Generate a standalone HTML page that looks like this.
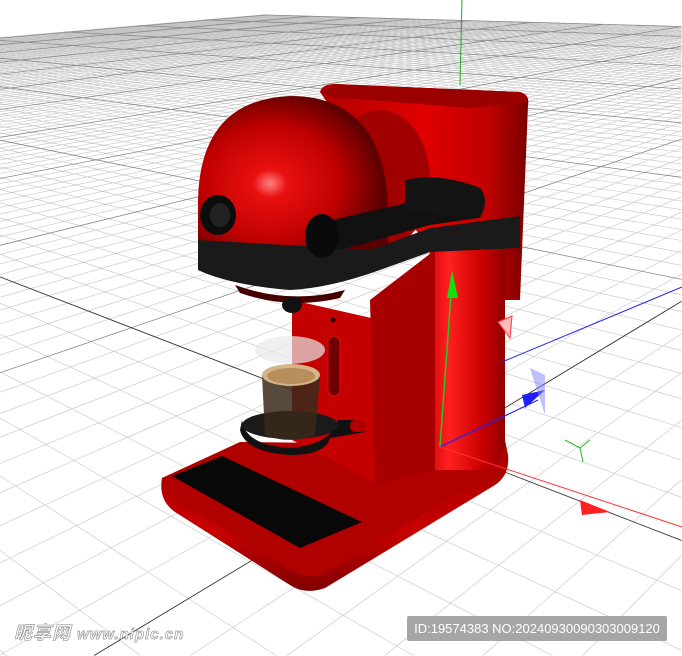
<!DOCTYPE html>
<html><head><meta charset="utf-8"><style>
html,body{margin:0;padding:0;width:682px;height:656px;overflow:hidden;background:#fff}
svg{overflow:hidden}
.wm{position:absolute;left:14px;top:619px;font:italic bold 18px "Liberation Sans","Noto Sans CJK SC",sans-serif;color:#fff;-webkit-text-stroke:0.7px #999;letter-spacing:1px}
.wm small{font-size:15px}
.id{position:absolute;left:407px;top:616px;width:260px;height:25px;background:#a6a6a6;color:#fff;font:13px "Liberation Sans",sans-serif;line-height:25px;text-align:center;border-radius:2px}
</style></head><body>
<svg width="682" height="656" viewBox="0 0 682 656" style="position:absolute;left:0;top:0">
<defs>
<radialGradient id="dome" cx="0.38" cy="0.55" r="0.6">
<stop offset="0" stop-color="#ff8080"/><stop offset="0.15" stop-color="#e81010"/><stop offset="0.6" stop-color="#c00000"/><stop offset="1" stop-color="#5a0000"/></radialGradient>
<linearGradient id="tower" x1="0" x2="1"><stop offset="0" stop-color="#b00000"/><stop offset="0.5" stop-color="#e00000"/><stop offset="0.8" stop-color="#c00000"/><stop offset="1" stop-color="#7a0000"/></linearGradient>
<linearGradient id="front" x1="0" x2="1"><stop offset="0" stop-color="#d00000"/><stop offset="0.3" stop-color="#ff2020"/><stop offset="0.7" stop-color="#cc0000"/><stop offset="1" stop-color="#900000"/></linearGradient>
<linearGradient id="base" x1="0" y1="0" x2="0" y2="1"><stop offset="0" stop-color="#a00000"/><stop offset="0.6" stop-color="#c80000"/><stop offset="1" stop-color="#800000"/></linearGradient>
</defs>
<g id="grid"></g>
<line x1="462" y1="0" x2="460" y2="85" stroke="#2a2" stroke-width="1"/>
<!-- base -->
<path d="M162,478 Q158,500 175,512 L290,585 Q305,595 325,588 L495,485 Q510,475 508,455 L505,440 L430,448 L240,445 Z" fill="url(#base)"/>
<path d="M162,478 Q160,492 178,502 L296,572 Q310,580 326,573 L500,468 Q510,460 505,445 L240,442 Z" fill="#b00000"/>
<path d="M172,476 L222,456 L362,522 L300,548 Z" fill="#080808"/>
<!-- tower back -->
<path d="M320,92 Q322,84 335,84 L520,92 Q530,95 528,105 L520,300 L505,300 L500,450 Q498,470 470,470 L430,470 L430,250 L360,150 Z" fill="url(#tower)"/>
<path d="M320,92 L335,84 L520,92 Q530,95 526,102 L470,108 L330,97 Z" fill="#9a0000"/>
<!-- front column -->
<path d="M430,240 L505,230 L505,445 Q500,470 470,470 L435,470 Q425,460 425,440 Z" fill="url(#front)"/>
<!-- middle panel -->
<path d="M292,300 L380,320 L380,485 L292,440 Z" fill="#c40000"/>
<path d="M370,300 L435,250 L435,470 L375,485 Z" fill="#a80000"/>
<rect x="328" y="336" width="12" height="60" rx="6" fill="#700000" stroke="#e01010"/>
<circle cx="333" cy="320" r="2.5" fill="#200"/>
<!-- dome back cylinder -->
<ellipse cx="380" cy="180" rx="50" ry="70" fill="#a00000"/>
<!-- dome -->
<path d="M198,255 L198,200 Q200,100 290,96 Q380,96 388,200 L388,255 Z" fill="url(#dome)"/>
<path d="M198,240 L370,250 L430,228 L520,216 L520,248 L430,252 L380,270 Q330,288 290,290 Q230,285 198,270 Z" fill="#1a1a1a"/>
<path d="M235,285 Q290,305 345,290 L340,298 Q290,310 240,293 Z" fill="#400"/>
<ellipse cx="292" cy="305" rx="10" ry="8" fill="#111"/>
<!-- knob -->
<ellipse cx="218" cy="215" rx="18" ry="20" fill="#0d0d0d"/>
<ellipse cx="220" cy="215" rx="10" ry="12" fill="#222"/>
<!-- handle -->
<path d="M310,225 L420,200 L470,185 L485,200 L478,218 L430,225 L340,250 Z" fill="#111"/>
<ellipse cx="322" cy="236" rx="17" ry="22" fill="#0a0a0a"/>
<path d="M405,180 Q440,172 480,188 Q490,200 480,218 L440,215 L405,210 Z" fill="#141414"/>
<!-- cup & tray -->
<ellipse cx="290" cy="350" rx="35" ry="14" fill="#e8e8e8" opacity="0.7"/>
<path d="M242,420 Q245,445 290,448 Q330,445 338,420 L360,420 L365,432 L330,438 Q325,455 290,455 Q245,452 240,430 Z" fill="#111"/>
<ellipse cx="290" cy="425" rx="48" ry="14" fill="#1a1a1a"/>
<path d="M262,375 L265,435 Q290,445 315,435 L320,375 Z" fill="#3a2a1a" opacity="0.85"/>
<ellipse cx="291" cy="375" rx="29" ry="11" fill="#d6b48a"/>
<ellipse cx="291" cy="376" rx="24" ry="8" fill="#b88e5a"/>
<rect x="350" y="420" width="16" height="12" rx="5" fill="#b00000"/>
<!-- axes -->
<line x1="440" y1="447" x2="452" y2="280" stroke="#22cc22" stroke-width="1.5"/>
<path d="M447,298 L452,270 L458,298 Z" fill="#11dd11"/>
<line x1="440" y1="447" x2="538" y2="400" stroke="#2020ff" stroke-width="1.2"/>
<line x1="502" y1="362" x2="682" y2="287" stroke="#2020ff" stroke-width="1"/>
<path d="M522,395 L545,390 L525,408 Z" fill="#2020ff"/>
<path d="M530,368 L545,375 L545,415 Z" fill="#8080ff" opacity="0.5"/>
<line x1="440" y1="447" x2="682" y2="527" stroke="#ff3030" stroke-width="1"/>
<path d="M580,500 L610,512 L582,515 Z" fill="#ff2020"/>
<path d="M498,322 L512,316 L510,338 Z" fill="#ffbbbb" stroke="#f33"/>
<path d="M565,440 L580,448 L590,440 M580,448 L583,462" stroke="#22bb22" fill="none"/>
</svg>
<div class="wm">昵享网 <small>www.nipic.cn</small></div>
<div class="id">ID:19574383 NO:20240930090303009120</div>
<script>
(function(){
var g=document.getElementById('grid'),NS='http://www.w3.org/2000/svg';
var O=[440,447],V1=[-750,-13],V2=[1306,-75],s1=0.035,s2=0.045,U=111,V=80;
function P(u,v){var a=s1*u,b=s2*v,w=1+a+b;return [(O[0]+a*V1[0]+b*V2[0])/w,(O[1]+a*V1[1]+b*V2[1])/w];}
function clip(p,q){
 var x0=p[0],y0=p[1],dx=q[0]-x0,dy=q[1]-y0,t0=0,t1=1;
 var P_=[-dx,dx,-dy,dy],Q=[x0-0,681.5-x0,y0-0,655.5-y0];
 for(var i=0;i<4;i++){
  if(P_[i]==0){if(Q[i]<0)return '';continue;}
  var r=Q[i]/P_[i];
  if(P_[i]<0){if(r>t1)return '';if(r>t0)t0=r;}else{if(r<t0)return '';if(r<t1)t1=r;}
 }
 return 'M'+(x0+t0*dx).toFixed(1)+','+(y0+t0*dy).toFixed(1)+'L'+(x0+t1*dx).toFixed(1)+','+(y0+t1*dy).toFixed(1);
}
var minor='',major='',axis='';
for(var k=-200;k<=U;k++){
 var vmin=(0.03-1-s1*k)/s2; if(vmin>V)continue;
 var s=clip(P(k,vmin),P(k,V));
 if(k==0)axis+=s;else if(k%10==0)major+=s;else minor+=s;
}
for(var k=-200;k<=V;k++){
 var umin=(0.03-1-s2*k)/s1; if(umin>U)continue;
 var s=clip(P(umin,k),P(U,k));
 if(k==0)axis+=s;else if(k%10==0)major+=s;else minor+=s;
}
function add(d,c,w){if(!d)return;var p=document.createElementNS(NS,'path');p.setAttribute('d',d);p.setAttribute('stroke',c);p.setAttribute('stroke-width',w);p.setAttribute('fill','none');g.appendChild(p);}
add(minor,'#c4c4c4','0.6');add(major,'#888','0.8');add(axis,'#333','0.9');
})();
</script>
</body></html>
